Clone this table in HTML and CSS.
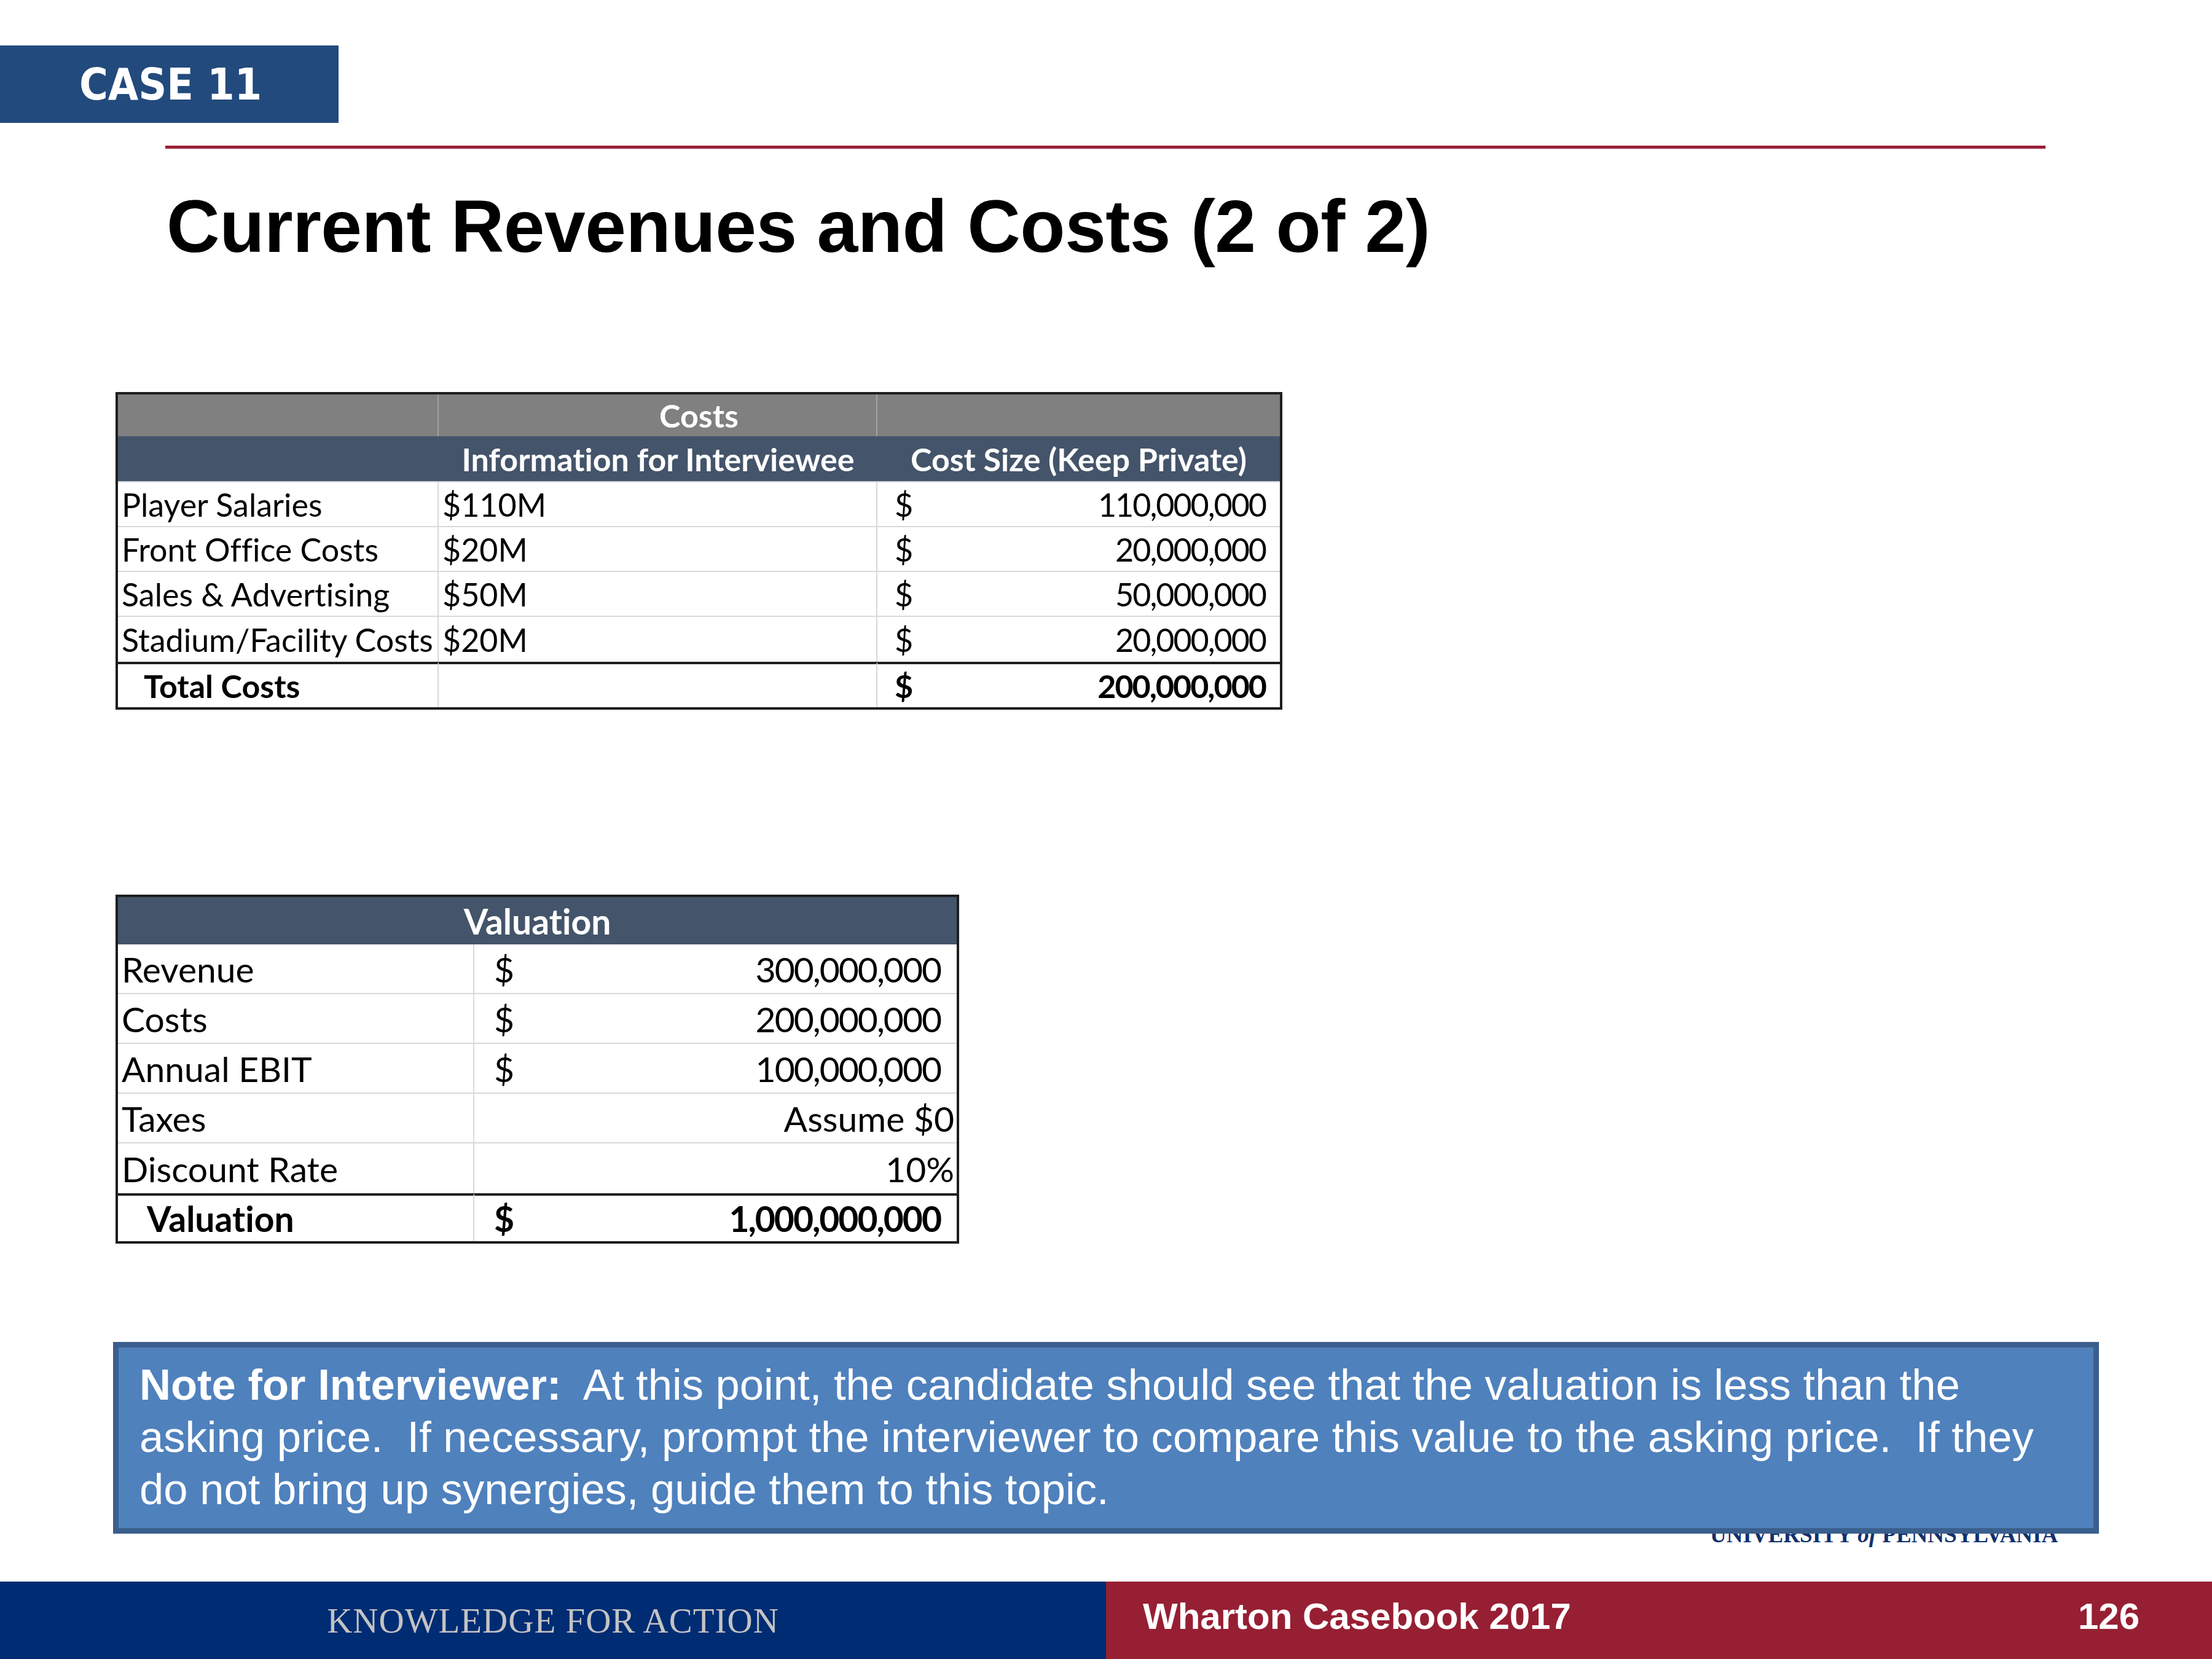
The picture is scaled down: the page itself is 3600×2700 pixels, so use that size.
FILE: index.html
```html
<!DOCTYPE html>
<html lang="en">
<head>
<meta charset="utf-8">
<title>Current Revenues and Costs (2 of 2)</title>
<link rel="stylesheet" href="styles.css">
</head>
<body>
<div class="slide">
  <div class="case-tag">CASE 11</div>
  <div class="rule"></div>
  <h1 class="title">Current Revenues and Costs (2 of 2)</h1>

  <div class="sheet costs">
    <div class="cell band">Costs</div>

    <div class="cell head"></div>
    <div class="cell head">Information for Interviewee</div>
    <div class="cell head last">Cost Size (Keep Private)</div>

    <div class="cell">Player Salaries</div>
    <div class="cell">$110M</div>
    <div class="cell acct last"><span>$</span><span class="num">110,000,000</span></div>

    <div class="cell">Front Office Costs</div>
    <div class="cell">$20M</div>
    <div class="cell acct last"><span>$</span><span class="num">20,000,000</span></div>

    <div class="cell">Sales &amp; Advertising</div>
    <div class="cell">$50M</div>
    <div class="cell acct last"><span>$</span><span class="num">50,000,000</span></div>

    <div class="cell pre">Stadium/Facility Costs</div>
    <div class="cell pre">$20M</div>
    <div class="cell acct last pre"><span>$</span><span class="num">20,000,000</span></div>

    <div class="cell total indent">Total Costs</div>
    <div class="cell total"></div>
    <div class="cell total acct last"><span>$</span><span class="num">200,000,000</span></div>
  </div>

  <div class="sheet valuation">
    <div class="cell vhead">Valuation</div>

    <div class="cell">Revenue</div>
    <div class="cell acct last"><span>$</span><span class="num">300,000,000</span></div>

    <div class="cell">Costs</div>
    <div class="cell acct last"><span>$</span><span class="num">200,000,000</span></div>

    <div class="cell">Annual EBIT</div>
    <div class="cell acct last"><span>$</span><span class="num">100,000,000</span></div>

    <div class="cell">Taxes</div>
    <div class="cell flush last">Assume $0</div>

    <div class="cell pre">Discount Rate</div>
    <div class="cell flush last pre">10%</div>

    <div class="cell total indent">Valuation</div>
    <div class="cell total acct last"><span>$</span><span class="num">1,000,000,000</span></div>
  </div>

  <div class="note">
    <b>Note for Interviewer:</b>&nbsp; At this point, the candidate should see that the valuation is less than the<br>
    asking price.&nbsp; If necessary, prompt the interviewer to compare this value to the asking price.&nbsp; If they<br>
    do not bring up synergies, guide them to this topic.
  </div>

  <div class="logo">UNIVERSITY <i>of</i> PENNSYLVANIA</div>

  <div class="footer">
    <div class="foot-left">KNOWLEDGE FOR ACTION</div>
    <div class="foot-right"><span>Wharton Casebook 2017</span><span>126</span></div>
  </div>
</div>
</body>
</html>
```

FILE: styles.css
```css
html, body {
  margin: 0;
  padding: 0;
  background: #ffffff;
}

.slide {
  width: 3600px;
  height: 2700px;
  position: relative;
  display: flex;
  flex-direction: column;
  align-items: flex-start;
  overflow: hidden;
  background: #ffffff;
  font-family: "Liberation Sans", Arial, sans-serif;
  color: #000000;
}

.case-tag {
  margin-top: 74px;
  width: 551px;
  height: 126px;
  box-sizing: border-box;
  padding-left: 129px;
  display: flex;
  align-items: center;
  background: #224a7c;
  color: #ffffff;
  font-family: "DejaVu Sans Condensed", "DejaVu Sans", sans-serif;
  font-weight: bold;
  font-size: 71px;
}

.rule {
  margin: 37px 0 0 269px;
  width: 3060px;
  height: 5px;
  background: #9a1f36;
}

.title {
  margin: 66px 0 0 271px;
  font-size: 120px;
  line-height: 120px;
  font-weight: bold;
  letter-spacing: -0.5px;
  color: #000000;
}

/* spreadsheet tables */
.sheet {
  margin-left: 188px;
  display: grid;
  border: 4px solid #1e1e1e;
  box-sizing: border-box;
  font-family: Lato, "Open Sans", sans-serif;
  font-variant-ligatures: none;
  font-feature-settings: "liga" 0, "clig" 0;
  color: #000000;
}

.cell {
  display: flex;
  align-items: center;
  padding: 0 6px;
  border-right: 2px solid #d9d9d9;
  border-bottom: 2px solid #d9d9d9;
  box-sizing: border-box;
  white-space: nowrap;
  min-width: 0;
  overflow: hidden;
}

.cell.last {
  border-right: none;
}

.cell.pre {
  border-bottom: none;
}

.cell.total {
  border-top: 4px solid #1e1e1e;
  border-bottom: none;
  font-weight: bold;
}

.cell.indent {
  padding-left: 42px;
}

.cell.acct {
  justify-content: space-between;
}

.num {
  letter-spacing: -2px;
}

.cell.flush {
  justify-content: flex-end;
  padding-right: 4px;
}

.cell.band {
  grid-column: 1 / -1;
  justify-content: center;
  border: none;
  color: #ffffff;
  font-weight: bold;
  background:
    linear-gradient(to right,
      transparent 520px, #a3a3a3 520px, #a3a3a3 522px,
      transparent 522px, transparent 1234px,
      #a3a3a3 1234px, #a3a3a3 1236px, transparent 1236px),
    #808080;
}

.cell.head {
  justify-content: center;
  background: #44546a;
  color: #ffffff;
  font-weight: bold;
  border-right: none;
  border-bottom: 2px solid #cfd3d9;
}

.cell.vhead {
  grid-column: 1 / -1;
  justify-content: center;
  background: #44546a;
  color: #ffffff;
  font-weight: bold;
  border: none;
}

/* costs table */
.costs {
  margin-top: 210px;
  width: 1899px;
  grid-template-columns: 522px 714px 655px;
  font-size: 52px;
}

.costs .cell {
  height: 73px;
}

.costs .cell.band {
  height: 68px;
}

.costs .cell.head {
  height: 75px;
}

.costs .cell.total {
  height: 74px;
}

.costs .cell.acct {
  padding: 0 23px 0 28px;
}

/* valuation table */
.valuation {
  margin-top: 301px;
  width: 1373px;
  grid-template-columns: 580px 785px;
  font-size: 57px;
}

.valuation .cell {
  height: 81px;
}

.valuation .cell.vhead {
  height: 77px;
}

.valuation .cell.total {
  height: 78px;
}

.valuation .cell.indent {
  padding-left: 47px;
}

.valuation .cell.acct {
  padding: 0 26px 0 32px;
}

/* interviewer note */
.note {
  position: relative;
  z-index: 2;
  margin: 160px 0 0 184px;
  width: 3232px;
  height: 312px;
  box-sizing: border-box;
  border: 9px solid #3b5f8d;
  background: #4f81bd;
  color: #ffffff;
  font-size: 70.6px;
  line-height: 85px;
  padding: 18px 30px 0 34px;
  white-space: nowrap;
}

/* university wordmark partially hidden under the note */
.logo {
  position: absolute;
  z-index: 1;
  left: 2783px;
  top: 2479px;
  font-family: "Liberation Serif", "Times New Roman", serif;
  font-size: 37px;
  line-height: 37px;
  font-weight: bold;
  color: #11306c;
}

.footer {
  margin-top: auto;
  width: 100%;
  height: 126px;
  display: flex;
}

.foot-left {
  width: 1800px;
  background: #002c73;
  display: flex;
  align-items: center;
  justify-content: center;
  font-family: "Liberation Serif", "Times New Roman", serif;
  font-size: 57px;
  letter-spacing: 1px;
  color: #c3c3c3;
}

.foot-right {
  flex: 1;
  background: #971f33;
  display: flex;
  align-items: center;
  justify-content: space-between;
  box-sizing: border-box;
  padding: 0 118px 14px 60px;
  color: #ffffff;
  font-weight: bold;
  font-size: 60px;
}
```
